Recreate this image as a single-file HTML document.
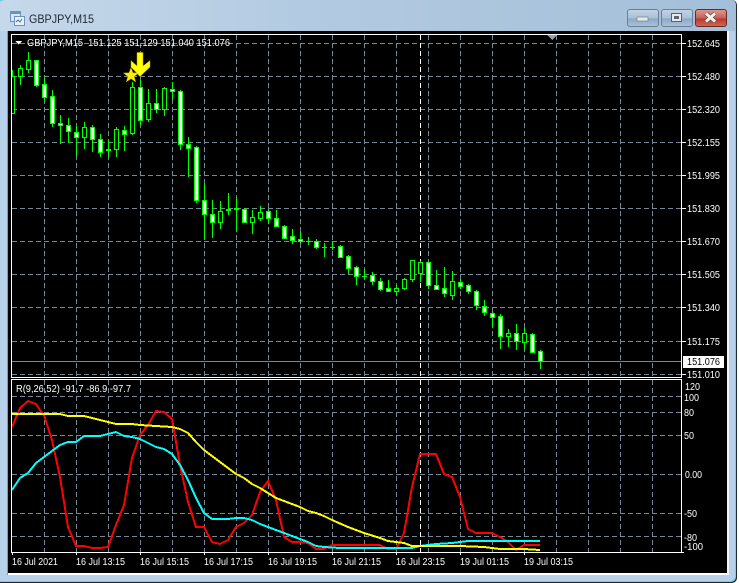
<!DOCTYPE html>
<html><head><meta charset="utf-8"><style>
html,body{margin:0;padding:0;background:#fff}
svg{display:block}
text{font-family:"Liberation Sans",sans-serif;font-size:10px;fill:#fff}
</style></head><body>
<svg width="739" height="583" viewBox="0 0 739 583" xmlns="http://www.w3.org/2000/svg">
<defs>
<linearGradient id="tb" x1="0" y1="0" x2="1" y2="0"><stop offset="0" stop-color="#c6d8ea"/><stop offset=".4" stop-color="#b3cbe2"/><stop offset="1" stop-color="#a4bfd9"/></linearGradient>
<linearGradient id="btn" x1="0" y1="0" x2="0" y2="1"><stop offset="0" stop-color="#c3d4e6"/><stop offset=".5" stop-color="#a9c0d8"/><stop offset=".55" stop-color="#8ea9c6"/><stop offset="1" stop-color="#a9c4dc"/></linearGradient>
<linearGradient id="cl" x1="0" y1="0" x2="0" y2="1"><stop offset="0" stop-color="#dc9a8e"/><stop offset=".5" stop-color="#c9605a"/><stop offset=".55" stop-color="#b63a30"/><stop offset="1" stop-color="#cf6a50"/></linearGradient>
<clipPath id="main"><rect x="12" y="35" width="670" height="342"/></clipPath>
<clipPath id="ind"><rect x="12" y="380" width="670" height="172"/></clipPath>
</defs>
<rect width="739" height="583" fill="#fff"/>
<rect x="-4" y="0" width="741" height="583" rx="5" fill="#1c2a36"/>
<rect x="-4" y="0" width="740" height="582" rx="5" fill="#6fd2e6"/>
<rect x="-4" y="1" width="739" height="580" rx="5" fill="#b7d1ea"/>
<path d="M0 5Q1 0 5 0H731Q736 0 736 6V12H735V31H0z" fill="url(#tb)"/>
<rect x="7" y="31" width="1" height="544" fill="#8c98a4"/>
<rect x="8" y="31" width="719" height="542" fill="#000"/>
<rect x="8" y="573" width="721" height="2" fill="#fff"/>
<rect x="727" y="31" width="2" height="544" fill="#f2f6fa"/>

<!-- window icon -->
<rect x="10.5" y="11.5" width="10" height="10" fill="#d9e6f4" stroke="#6d92bd"/>
<rect x="11" y="12" width="9" height="2" fill="#6d92bd"/>
<rect x="14.5" y="16.5" width="10" height="9" fill="#e8f0f8" stroke="#6d92bd"/>
<path d="M16 22l2-2 2 2 2-3" stroke="#4a72a8" fill="none"/>
<text x="29" y="23" textLength="65" lengthAdjust="spacingAndGlyphs" style="font-size:12px;fill:#202a36">GBPJPY,M15</text>

<!-- buttons -->
<rect x="627.5" y="9.5" width="31" height="17" rx="2.5" fill="url(#btn)" stroke="#6d7f92"/>
<rect x="637" y="17" width="11" height="4" fill="#e6e8ea" stroke="#6a7480" stroke-width=".6"/>
<rect x="661.5" y="9.5" width="31" height="17" rx="2.5" fill="url(#btn)" stroke="#6d7f92"/>
<rect x="671.5" y="13.5" width="10" height="8" fill="#e6e8ea" stroke="#55606c"/>
<rect x="674" y="16" width="5" height="3" fill="#5b6672"/>
<rect x="695.5" y="9.5" width="31" height="17" rx="2.5" fill="url(#cl)" stroke="#6b2a26"/>
<path d="M706 13.500l9 8M715 13.500l-9 8" stroke="#5e4a46" stroke-width="4.400"/>
<path d="M706 13.500l9 8M715 13.500l-9 8" stroke="#f0f0f0" stroke-width="3"/>

<g shape-rendering="crispEdges">
<!-- grid main -->
<g clip-path="url(#main)">
<path d="M12 43.5H682M12 76.5H682M12 109.5H682M12 142.5H682M12 175.5H682M12 208.5H682M12 241.5H682M12 274.5H682M12 307.5H682M12 341.5H682M12 374.5H682" stroke="#778899" stroke-dasharray="5 3" fill="none"/>
<path d="M44.5 35V377M76.5 35V377M108.5 35V377M140.5 35V377M172.5 35V377M204.5 35V377M236.5 35V377M268.5 35V377M300.5 35V377M332.5 35V377M364.5 35V377M396.5 35V377M428.5 35V377M460.5 35V377M492.5 35V377M524.5 35V377M556.5 35V377M588.5 35V377M620.5 35V377M652.5 35V377" stroke="#778899" stroke-dasharray="5 3" fill="none"/>
<path d="M420.5 35V377" stroke="#fff" stroke-dasharray="5 3" fill="none"/>
<path d="M12 361.5H682" stroke="#778899" fill="none"/>
<!-- wicks -->
<path d="M12.5 70V113M20.5 65V85M28.5 52V73M36.5 60V87M44.5 78V101M52.5 90V127M60.5 115V144M68.5 118V143M76.5 126V156M84.5 122V149M92.5 125V152M100.5 134V157M108.5 140V157M116.5 127V157M124.5 126V151M132.5 82V135M140.5 80V125M148.5 89V122M156.5 89V113M164.5 87V116M172.5 82V99M180.5 90V150M188.5 137V177M196.5 146V203M204.5 184V240M212.5 200V238M220.5 201V229M228.5 193V215M236.5 197V231M244.5 208V223M252.5 210V234M260.5 206V221M268.5 209V224M276.5 210V227M284.5 225V238M292.5 229V244M300.5 232V244M308.5 237V245M316.5 239V249M324.5 243V257M332.5 241V250M340.5 245V258M348.5 255V274M356.5 266V285M364.5 269V279M372.5 272V285M380.5 278V291M388.5 280V292M396.5 285V295M404.5 278V290M412.5 260V282M420.5 261V282M428.5 261V289M436.5 270V290M444.5 267V297M452.5 271V300M460.5 279V289M468.5 284V294M476.5 290V310M484.5 300V316M492.5 311V327M500.5 314V349M508.5 329V347M516.5 324V350M524.5 328V350M532.5 333V353M540.5 350V369" stroke="#00ff00" fill="none"/>
<!-- hollow -->
<path d="M10.5 76.5h4v37h-4zM18.5 68.5h4v8h-4zM26.5 60.5h4v9h-4zM82.5 127.5h4v10h-4zM114.5 129.5h4v20h-4zM130.5 87.5h4v46h-4zM146.5 103.5h4v16h-4zM162.5 88.5h4v21h-4zM218.5 211.5h4v11h-4zM250.5 217.5h4v5h-4zM258.5 212.5h4v6h-4zM394.5 288.5h4v3h-4zM402.5 279.5h4v9h-4zM410.5 260.5h4v19h-4zM418.5 262.5h4v11h-4zM450.5 281.5h4v14h-4zM506.5 333.5h4v3h-4zM522.5 333.5h4v9h-4z" fill="#000" stroke="#00ff00"/>
<!-- filled -->
<path d="M34.5 60.5h4v25h-4zM42.5 84.5h4v13h-4zM50.5 96.5h4v27h-4zM58.5 123.5h4v2h-4zM66.5 125.5h4v6h-4zM74.5 132.5h4v5h-4zM90.5 127.5h4v12h-4zM98.5 139.5h4v13h-4zM122.5 130.5h4v4h-4zM138.5 87.5h4v33h-4zM154.5 103.5h4v6h-4zM170.5 89.5h4v2h-4zM178.5 91.5h4v53h-4zM186.5 144.5h4v4h-4zM194.5 147.5h4v53h-4zM202.5 200.5h4v14h-4zM210.5 214.5h4v8h-4zM242.5 209.5h4v13h-4zM266.5 211.5h4v7h-4zM274.5 218.5h4v8h-4zM282.5 226.5h4v12h-4zM290.5 236.5h4v4h-4zM298.5 239.5h4v2h-4zM314.5 241.5h4v6h-4zM338.5 246.5h4v11h-4zM346.5 256.5h4v12h-4zM354.5 267.5h4v9h-4zM370.5 275.5h4v6h-4zM378.5 281.5h4v8h-4zM386.5 288.5h4v3h-4zM426.5 262.5h4v23h-4zM434.5 285.5h4v4h-4zM442.5 288.5h4v5h-4zM458.5 282.5h4v4h-4zM466.5 285.5h4v6h-4zM474.5 291.5h4v14h-4zM482.5 306.5h4v6h-4zM490.5 313.5h4v4h-4zM498.5 316.5h4v20h-4zM514.5 333.5h4v8h-4zM530.5 334.5h4v18h-4zM538.5 351.5h4v10h-4z" fill="#fff" stroke="#00ff00"/>
<!-- doji -->
<path d="M106 149h5v2h-5zM226 209h5v2h-5zM234 208h5v2h-5zM306 241h5v1h-5zM322 247h5v1h-5zM330 247h5v1h-5zM362 276h5v1h-5z" fill="#00ff00"/>
</g>

<!-- indicator grid -->
<g clip-path="url(#ind)">
<path d="M12 396.5H682M12 412.5H682M12 435.5H682M12 474.5H682M12 513.5H682M12 536.5H682" stroke="#778899" stroke-dasharray="5 3" fill="none"/>
<path d="M44.5 380V552M76.5 380V552M108.5 380V552M140.5 380V552M172.5 380V552M204.5 380V552M236.5 380V552M268.5 380V552M300.5 380V552M332.5 380V552M364.5 380V552M396.5 380V552M428.5 380V552M460.5 380V552M492.5 380V552M524.5 380V552M556.5 380V552M588.5 380V552M620.5 380V552M652.5 380V552" stroke="#778899" stroke-dasharray="5 3" fill="none"/>
<path d="M420.5 380V552" stroke="#fff" stroke-dasharray="5 3" fill="none"/>
<polyline fill="none" stroke="#ff0000" stroke-width="2" points="12,427 20,408 28,401 36,404 40,410 44,415 52,440 60,477 68,527 76,546 84,546 92,548 100,548 108,547 116,525 124,505 132,458 140,435 148,425 156,411 164,412 172,419 180,465 188,502 196,527 204,527 212,542 220,544 228,540 236,527 244,523 252,515 260,492 268,481 276,500 284,537 292,542 300,542 308,543 316,549 324,549 332,545 380,545 388,549 396,549 404,533 412,487 420,454 436,454 444,474 452,477 460,497 468,529 476,533 492,533 500,537 508,542 516,550 524,545 540,545"/>
<polyline fill="none" stroke="#00ffff" stroke-width="2" points="12,490 20,478 28,473 36,463 44,457 52,451 60,445 68,442 76,442 84,436 100,436 108,434 116,432 124,436 132,437 140,439 148,443 156,447 164,449 172,454 180,465 188,480 196,498 204,513 212,519 228,519 236,518 244,518 252,520 260,524 276,530 284,533 300,539 308,542 316,546 324,547 340,548 412,548 420,546 436,544 452,543 468,541 540,541"/>
<polyline fill="none" stroke="#ffff00" stroke-width="2" points="12,414 44,414 60,414 68,416 84,416 92,418 100,420 108,422 116,424 132,424 140,425 156,426 172,427 180,429 188,433 196,442 204,450 212,456 220,462 228,468 236,474 244,478 252,484 260,488 268,493 276,498 284,501 300,507 308,511 316,513 324,516 332,520 348,527 364,533 380,538 388,541 396,542 404,543 412,546 460,546 484,547 500,549 524,549 540,550"/>
</g>

<!-- frames -->
<path d="M11.5 34.5H681.5V377.5H11.5zM11.5 379.5H681.5V552.5H11.5z" fill="none" stroke="#fff"/>
<!-- ticks -->
<path d="M682 43.5h4M682 76.5h4M682 109.5h4M682 142.5h4M682 175.5h4M682 208.5h4M682 241.5h4M682 274.5h4M682 307.5h4M682 341.5h4M682 374.5h4M682 552.5h2M12.5 552v3M76.5 552v3M140.5 552v3M204.5 552v3M268.5 552v3M332.5 552v3M396.5 552v3M460.5 552v3M524.5 552v3" stroke="#fff" fill="none"/>
<rect x="683" y="356" width="41" height="12" fill="#fff"/>
<!-- top triangle -->
<path d="M547 35h10l-5 5z" fill="#9aa0a6"/>
<!-- header triangle -->
<path d="M15 41h7l-3.500 3.500z" fill="#fff"/>
</g>

<!-- markers -->
<path d="M131 67.500l2 5.300 5.700.2-4.500 3.500 1.600 5.500-4.800-3.200-4.800 3.200 1.600-5.500-4.500-3.500 5.700-.2z" fill="#ffee00" stroke="#a89000" stroke-width=".5"/>
<path d="M137 52.500h6V66l7-5.500V67l-10 9.500L131 67v-6.500l6 5.500z" fill="#ffff00" stroke="#b8a000" stroke-width=".5"/>

<text x="27" y="46" textLength="203" lengthAdjust="spacingAndGlyphs" xml:space="preserve">GBPJPY,M15  151.125 151.129 151.040 151.076</text>
<text x="16" y="392" textLength="115" lengthAdjust="spacingAndGlyphs">R(9,26,52) -91.7 -86.9 -97.7</text>

<text x="687" y="47" textLength="33" lengthAdjust="spacingAndGlyphs">152.645</text>
<text x="687" y="80" textLength="33" lengthAdjust="spacingAndGlyphs">152.480</text>
<text x="687" y="113" textLength="33" lengthAdjust="spacingAndGlyphs">152.320</text>
<text x="687" y="146" textLength="33" lengthAdjust="spacingAndGlyphs">152.155</text>
<text x="687" y="179" textLength="33" lengthAdjust="spacingAndGlyphs">151.995</text>
<text x="687" y="212" textLength="33" lengthAdjust="spacingAndGlyphs">151.830</text>
<text x="687" y="245" textLength="33" lengthAdjust="spacingAndGlyphs">151.670</text>
<text x="687" y="278" textLength="33" lengthAdjust="spacingAndGlyphs">151.505</text>
<text x="687" y="311" textLength="33" lengthAdjust="spacingAndGlyphs">151.340</text>
<text x="687" y="345" textLength="33" lengthAdjust="spacingAndGlyphs">151.175</text>
<text x="687" y="365" textLength="33" lengthAdjust="spacingAndGlyphs" style="fill:#000">151.076</text>
<text x="687" y="378" textLength="33" lengthAdjust="spacingAndGlyphs">151.010</text>
<text x="685" y="390" textLength="15" lengthAdjust="spacingAndGlyphs">120</text>
<text x="684" y="401" textLength="15" lengthAdjust="spacingAndGlyphs">100</text>
<text x="684" y="416" textLength="10" lengthAdjust="spacingAndGlyphs">80</text>
<text x="684" y="439" textLength="10" lengthAdjust="spacingAndGlyphs">50</text>
<text x="685" y="478" textLength="17" lengthAdjust="spacingAndGlyphs">0.00</text>
<text x="684" y="517" textLength="13" lengthAdjust="spacingAndGlyphs">-50</text>
<text x="684" y="541" textLength="13" lengthAdjust="spacingAndGlyphs">-80</text>
<text x="684" y="550" textLength="19" lengthAdjust="spacingAndGlyphs">-100</text>

<text x="12" y="565" textLength="46" lengthAdjust="spacingAndGlyphs">16 Jul 2021</text>
<text x="76" y="565" textLength="49" lengthAdjust="spacingAndGlyphs">16 Jul 13:15</text>
<text x="140" y="565" textLength="49" lengthAdjust="spacingAndGlyphs">16 Jul 15:15</text>
<text x="204" y="565" textLength="49" lengthAdjust="spacingAndGlyphs">16 Jul 17:15</text>
<text x="268" y="565" textLength="49" lengthAdjust="spacingAndGlyphs">16 Jul 19:15</text>
<text x="332" y="565" textLength="49" lengthAdjust="spacingAndGlyphs">16 Jul 21:15</text>
<text x="396" y="565" textLength="49" lengthAdjust="spacingAndGlyphs">16 Jul 23:15</text>
<text x="460" y="565" textLength="49" lengthAdjust="spacingAndGlyphs">19 Jul 01:15</text>
<text x="524" y="565" textLength="49" lengthAdjust="spacingAndGlyphs">19 Jul 03:15</text>
</svg>
</body></html>
